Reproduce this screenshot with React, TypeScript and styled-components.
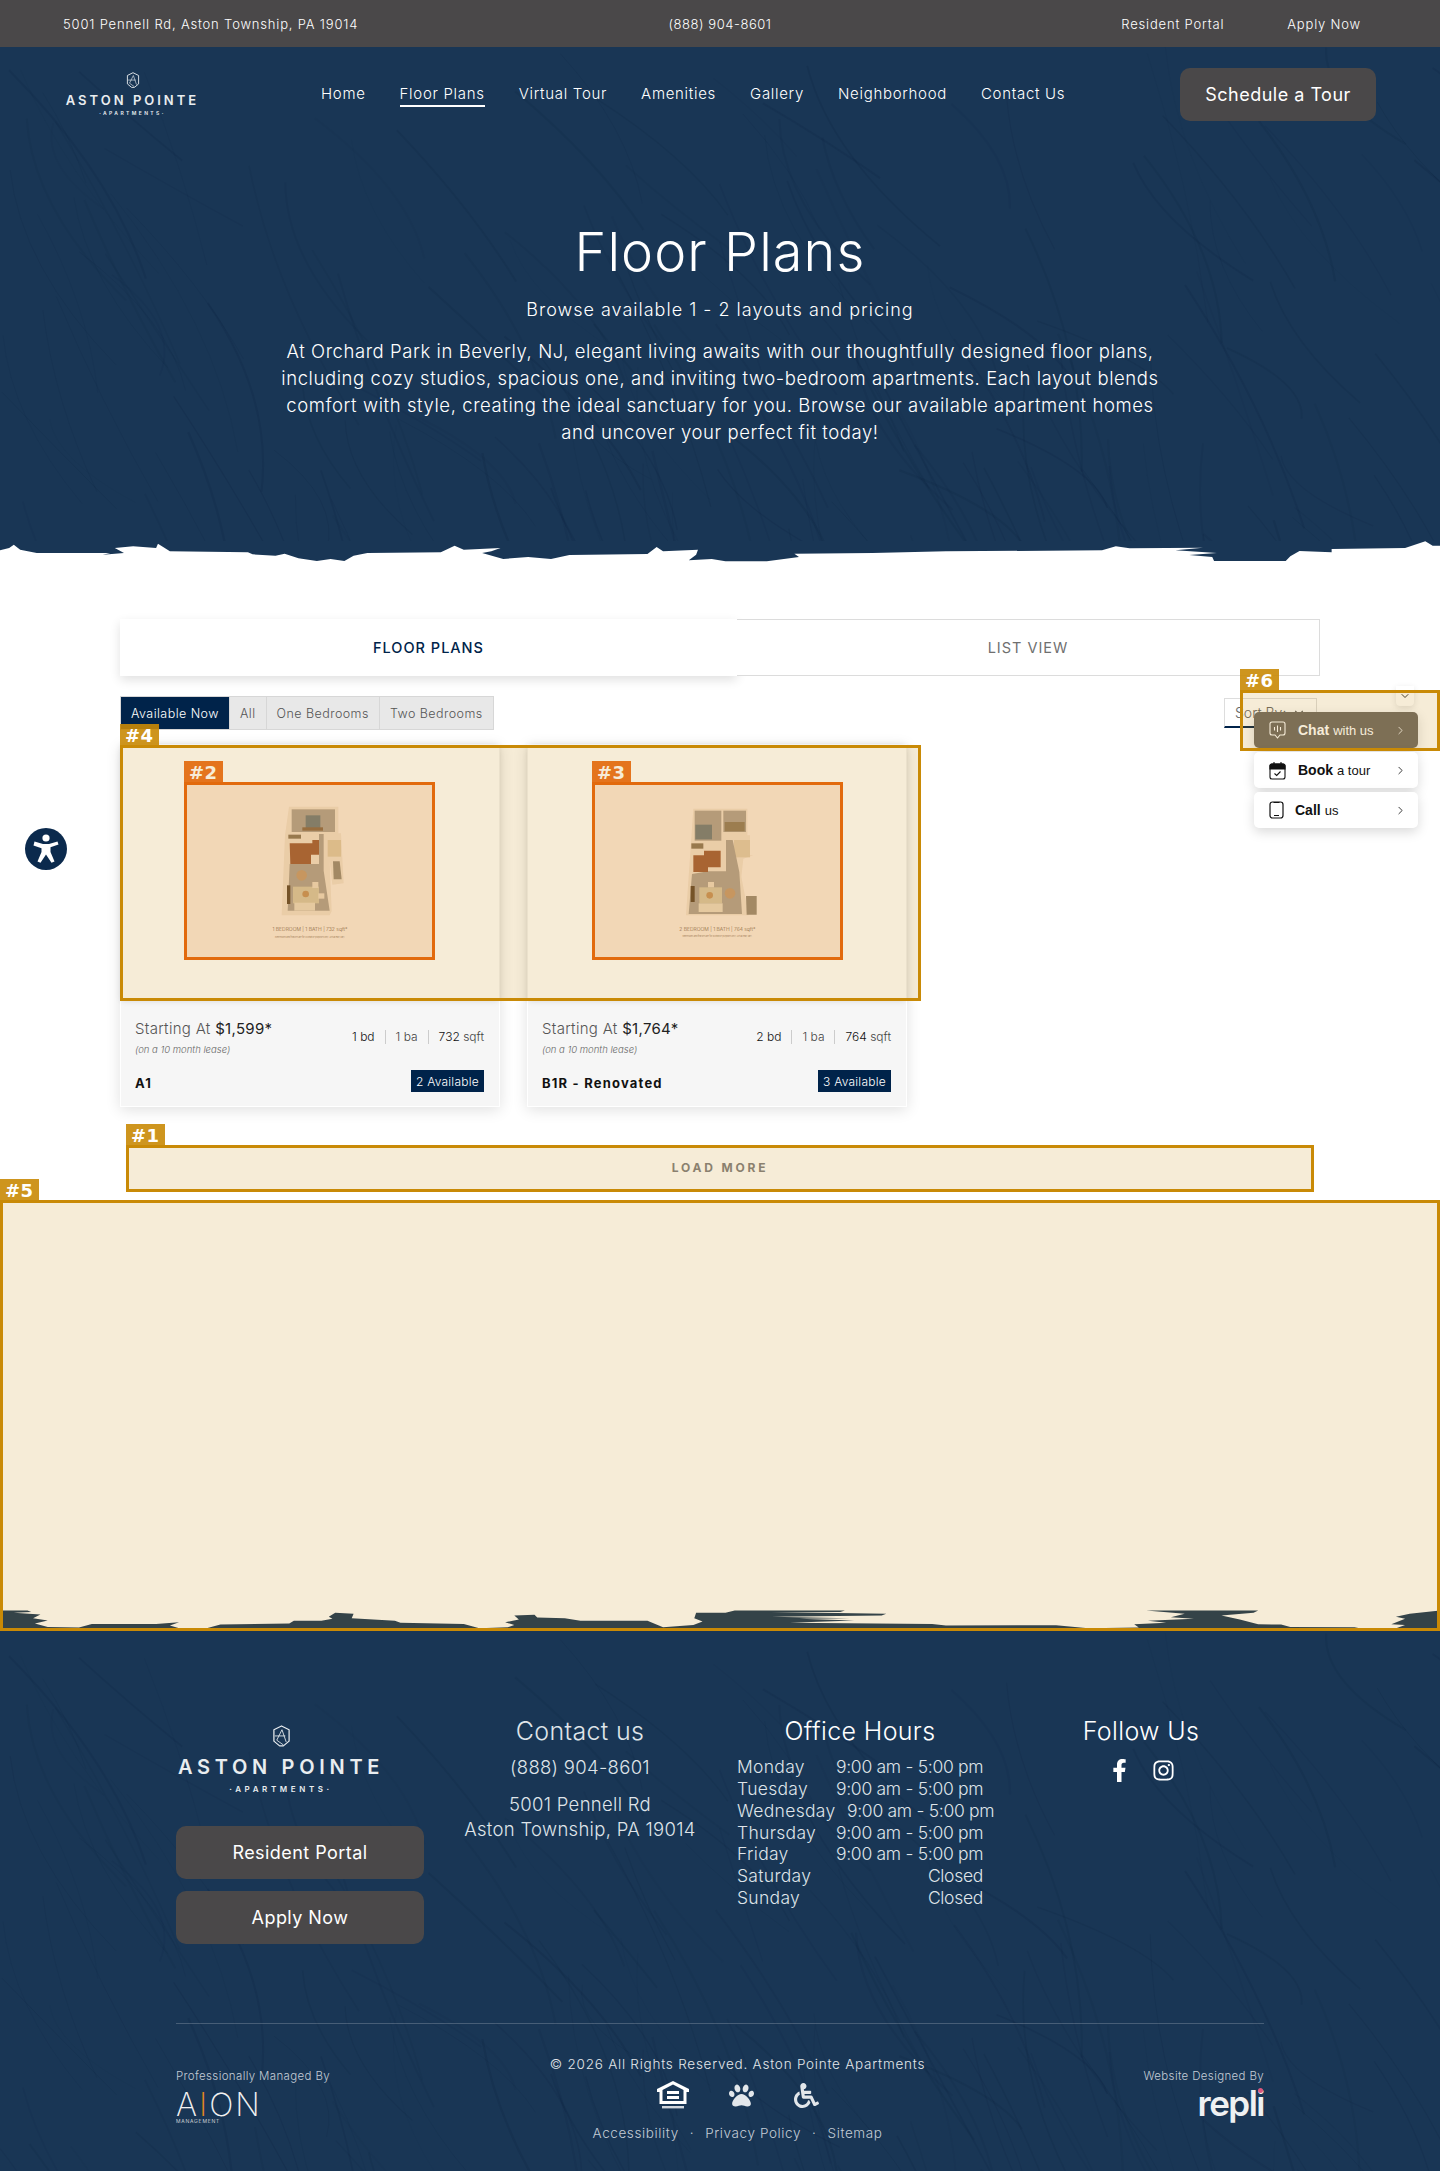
import styled, { createGlobalStyle } from "styled-components";
import { FaFacebookF, FaInstagram, FaPaw, FaWheelchair } from "react-icons/fa";
import { LuChevronDown, LuChevronRight } from "react-icons/lu";

const SANS = `"Inter", "Liberation Sans", sans-serif`;
const NAVY = "#193655";
const SLATE = "#4a4849";
const INK = "#00234a";

// soft brush strokes used behind the navy areas
const makeTexture = () => {
  let seed = 7;
  const rnd = () => {
    seed = (seed * 16807) % 2147483647;
    return seed / 2147483647;
  };
  let paths = "";
  for (let i = 0; i < 190; i++) {
    const x = rnd() * 1440;
    const y = rnd() * 560;
    const len = 70 + rnd() * 200;
    const lean = 40 + rnd() * 100;
    const bend = rnd() * 90 - 45;
    paths += `<path d='M${x} ${y}q${lean / 2 + bend} ${len / 2} ${lean} ${len}' fill='none' stroke='rgba(0,20,45,${(0.04 + rnd() * 0.07).toFixed(2)})' stroke-width='${(0.6 + rnd() * 1.6).toFixed(1)}'/>`;
  }
  const svg = `<svg xmlns='http://www.w3.org/2000/svg' width='1440' height='560'>${paths}</svg>`;
  return `url("data:image/svg+xml,${encodeURIComponent(svg)}")`;
};
const texture = makeTexture();

const GlobalStyle = createGlobalStyle`
  * { box-sizing: border-box; }
  html, body { margin: 0; padding: 0; background: #fff; }
  body { font-family: ${SANS}; }
  a { color: inherit; text-decoration: none; }
`;

const Page = styled.div`
  position: relative;
  width: 1440px;
  height: 2171px;
  overflow: hidden;
  background: #fff;
`;

const TopBar = styled.div`
  display: grid;
  grid-template-columns: 1fr auto 1fr;
  align-items: center;
  height: 47px;
  padding: 0 63px;
  background: ${SLATE};
  color: #fff;
  font-size: 13px;
  font-weight: 300;
  letter-spacing: 0.82px;
`;

const Phone = styled.span`
  letter-spacing: 0.55px;
`;

const TopLinks = styled.div`
  display: flex;
  justify-content: flex-end;
  gap: 63px;
  padding-right: 16px;
`;

const Hero = styled.header`
  height: 494px;
  padding-top: 21px;
  background: ${NAVY} ${texture};
  color: #fff;
`;

const NavRow = styled.div`
  display: flex;
  align-items: center;
  height: 53px;
  padding: 0 64px 0 66px;
`;

const Brand = styled.div<{ $big?: boolean }>`
  display: flex;
  flex-direction: column;
  align-items: center;
  align-self: ${(p) => (p.$big ? "flex-start" : "auto")};
  width: ${(p) => (p.$big ? 210 : 133)}px;
  color: #e9edf0;
`;

const BrandName = styled.div<{ $big?: boolean }>`
  margin-top: ${(p) => (p.$big ? 10 : 5)}px;
  font-size: ${(p) => (p.$big ? 20 : 13)}px;
  line-height: ${(p) => (p.$big ? 20 : 14)}px;
  font-weight: 600;
  letter-spacing: ${(p) => (p.$big ? 4.7 : 3)}px;
  white-space: nowrap;
`;

const BrandSub = styled.div<{ $big?: boolean }>`
  margin-top: ${(p) => (p.$big ? 7 : 3)}px;
  font-size: ${(p) => (p.$big ? 8 : 5)}px;
  line-height: ${(p) => (p.$big ? 10 : 7)}px;
  font-weight: 600;
  letter-spacing: ${(p) => (p.$big ? 3.6 : 2.4)}px;
  white-space: nowrap;
`;

const Nav = styled.nav`
  display: flex;
  gap: 34px;
  margin-left: 122px;
  font-size: 15px;
  font-weight: 300;
  letter-spacing: 0.7px;
`;

const NavLink = styled.a<{ $active?: boolean }>`
  padding: 2px 0;
  border-bottom: 2px solid ${(p) => (p.$active ? "#fff" : "transparent")};
  white-space: nowrap;
`;

const TourButton = styled.a`
  display: flex;
  align-items: center;
  justify-content: center;
  width: 196px;
  height: 53px;
  margin-left: auto;
  border-radius: 10px;
  background: ${SLATE};
  color: #fff;
  font-size: 18px;
  font-weight: 400;
  letter-spacing: 0.5px;
`;

const HeroText = styled.div`
  display: flex;
  flex-direction: column;
  align-items: center;
  margin-top: 98px;
  text-align: center;
`;

const Title = styled.h1`
  margin: 0;
  font-size: 54px;
  line-height: 66px;
  font-weight: 300;
  letter-spacing: 1.1px;
`;

const Subtitle = styled.div`
  margin-top: 12px;
  font-size: 18px;
  line-height: 26px;
  font-weight: 300;
  letter-spacing: 1px;
`;

const Intro = styled.p`
  width: 885px;
  margin: 15px 0 0;
  font-size: 18.5px;
  line-height: 27px;
  font-weight: 300;
  letter-spacing: 0.58px;
`;

const TornEdge = styled.svg<{ $h: number }>`
  display: block;
  width: 1440px;
  height: ${(p) => p.$h}px;
`;

const Main = styled.main`
  height: 1045px;
  padding: 57px 120px 0;
`;

const Tabs = styled.div`
  display: grid;
  grid-template-columns: 617px 583px;
  height: 57px;
`;

const Tab = styled.a<{ $active?: boolean }>`
  display: flex;
  align-items: center;
  justify-content: center;
  font-size: 14.5px;
  letter-spacing: 1px;
  color: ${(p) => (p.$active ? INK : "#6f6f6f")};
  font-weight: ${(p) => (p.$active ? 500 : 400)};
  border: ${(p) => (p.$active ? "0" : "1px solid #dcdcdc")};
  border-left: 0;
  box-shadow: ${(p) => (p.$active ? "0 4px 10px rgba(0,0,0,.12)" : "none")};
  background: #fff;
`;

const ToolRow = styled.div`
  display: flex;
  justify-content: space-between;
  align-items: flex-start;
  margin-top: 20px;
`;

const Filters = styled.div`
  display: flex;
  height: 34px;
  border: 1px solid #d7d7d7;
  background: #e8e8e8;
`;

const Filter = styled.a<{ $active?: boolean }>`
  display: flex;
  align-items: center;
  padding: 0 10px;
  font-size: 12.5px;
  font-weight: 300;
  letter-spacing: 0.45px;
  color: ${(p) => (p.$active ? "#fff" : "#555")};
  background: ${(p) => (p.$active ? INK : "transparent")};
  & + & {
    border-left: 1px solid #d7d7d7;
  }
`;

const SortBox = styled.div`
  display: flex;
  align-items: center;
  justify-content: space-between;
  width: 93px;
  height: 30px;
  margin: 2px 3px 0 0;
  padding: 0 10px;
  border: 1px solid #ddd;
  border-bottom: 2px solid ${INK};
  font-size: 14px;
  font-weight: 300;
  color: #666;
  white-space: nowrap;
`;

const Cards = styled.div`
  display: grid;
  grid-template-columns: repeat(3, 380px);
  gap: 27px;
  margin-top: 14px;
`;

const Card = styled.article`
  height: 363px;
  border: 1px solid #fff;
  background: #f6f6f6;
  box-shadow: 0 3px 14px rgba(0, 0, 0, 0.12);
`;

const CardImage = styled.div`
  display: flex;
  align-items: center;
  justify-content: center;
  height: 256px;
  background: #fff;
  box-shadow: 0 0 6px rgba(0, 0, 0, 0.12);
`;

const PlanSvg = styled.svg`
  width: 251px;
  height: 178px;
  margin-bottom: 4px;
`;

const CardBody = styled.div`
  padding: 17px 15px 0 14px;
`;

const PriceRow = styled.div`
  display: flex;
  justify-content: space-between;
  align-items: flex-end;
`;

const Price = styled.div`
  font-size: 15px;
  line-height: 22px;
  font-weight: 300;
  letter-spacing: 0.3px;
  color: #555;
  b {
    font-weight: 400;
    color: #222;
  }
`;

const Stats = styled.div`
  display: flex;
  align-items: center;
  margin-bottom: -4px;
  font-size: 12px;
  font-weight: 300;
  color: #444;
`;

const Stat = styled.span`
  padding: 0 10px;
  line-height: 14px;
  border-left: 1px solid #ccc;
  &:first-child {
    border-left: 0;
  }
  &:last-child {
    padding-right: 0;
  }
  b {
    font-weight: 300;
    color: #111;
  }
`;

const Lease = styled.div`
  margin-top: 4px;
  font-size: 9.5px;
  line-height: 12px;
  font-style: italic;
  font-weight: 300;
  color: #666;
`;

const NameRow = styled.div`
  display: flex;
  justify-content: space-between;
  align-items: flex-end;
  margin-top: 14px;
`;

const PlanName = styled.div`
  font-size: 13px;
  line-height: 18px;
  font-weight: 700;
  letter-spacing: 1.2px;
  color: #111;
`;

const Badge = styled.span`
  display: flex;
  align-items: center;
  height: 22px;
  padding: 0 5px;
  background: ${INK};
  color: #fff;
  font-size: 12px;
  font-weight: 300;
  letter-spacing: 0.25px;
`;

const LoadMore = styled.a`
  display: flex;
  align-items: center;
  justify-content: center;
  height: 47px;
  margin: 37px 6px 0;
  font-size: 12px;
  font-weight: 700;
  letter-spacing: 2.8px;
  color: #7f7f83;
`;

const Footer = styled.footer`
  height: 541px;
  padding: 75px 176px 0;
  background: ${NAVY} ${texture};
  color: #fff;
`;

const FooterTop = styled.div`
  display: flex;
  height: 316px;
  border-bottom: 1px solid rgba(255, 255, 255, 0.2);
`;

const BrandCol = styled.div`
  display: flex;
  flex-direction: column;
  align-items: center;
  width: 248px;
  padding-top: 17px;
`;

const FooterButton = styled.a<{ $first?: boolean }>`
  display: flex;
  align-items: center;
  justify-content: center;
  width: 248px;
  height: 53px;
  margin-top: ${(p) => (p.$first ? 32 : 12)}px;
  border-radius: 10px;
  background: ${SLATE};
  color: #fff;
  font-size: 18px;
  font-weight: 400;
  letter-spacing: 0.45px;
`;

const ColTitle = styled.h3`
  margin: 0;
  font-size: 25px;
  line-height: 46px;
  font-weight: 300;
  letter-spacing: 0.35px;
`;

const ContactCol = styled.div`
  width: 248px;
  margin-left: 32px;
  text-align: center;
  font-size: 18.5px;
  line-height: 25px;
  font-weight: 300;
  letter-spacing: 0.3px;
  color: #dfe4e9;
  white-space: nowrap;
  display: flex;
  flex-direction: column;
  align-items: center;
`;

const ContactLine = styled.div<{ $gap: number }>`
  margin-top: ${(p) => p.$gap}px;
`;

const HoursCol = styled.div`
  display: flex;
  flex-direction: column;
  width: 257px;
  margin-left: 33px;
  font-size: 17.5px;
  line-height: 21.85px;
  font-weight: 300;
  letter-spacing: 0.3px;
  color: #dfe4e9;
`;

const HoursTitle = styled(ColTitle)`
  margin-bottom: 2px;
  font-size: 25px;
  text-align: center;
  color: #fff;
  width: 246px;
`;

const HoursRow = styled.div`
  display: flex;
  white-space: nowrap;
`;

const Day = styled.span`
  min-width: 99px;
  padding-right: 15px;
`;

const Time = styled.span`
  width: 147px;
  text-align: right;
  letter-spacing: -0.3px;
`;

const FollowCol = styled.div`
  display: flex;
  flex-direction: column;
  align-items: center;
  width: 200px;
  margin-left: 47px;
`;

const Socials = styled.div`
  display: flex;
  align-items: center;
  gap: 21px;
  margin-top: 5px;
  font-size: 23px;
`;

const FooterBottom = styled.div`
  display: grid;
  grid-template-columns: 1fr auto 1fr;
  margin-top: 31px;
`;

const CreditCol = styled.div<{ $right?: boolean }>`
  display: flex;
  flex-direction: column;
  align-items: ${(p) => (p.$right ? "flex-end" : "flex-start")};
  padding-top: 13px;
  font-size: 11.5px;
  line-height: 16px;
  font-weight: 300;
  letter-spacing: 0.35px;
  color: #c3ccd5;
`;

const AionLogo = styled.div`
  display: flex;
  flex-direction: column;
  margin-top: 8px;
  color: #f1f1f1;
`;

const AionName = styled.div`
  font-size: 32px;
  line-height: 25px;
  font-weight: 200;
  letter-spacing: 2px;
  span {
    color: #e8891e;
  }
`;

const AionSub = styled.div`
  font-size: 5px;
  line-height: 8px;
  letter-spacing: 0.8px;
`;

const RepliLogo = styled.div`
  margin-top: 1px;
  font-size: 35px;
  line-height: 36px;
  font-weight: 600;
  letter-spacing: -1.5px;
  color: #eef0f2;
  span {
    position: relative;
  }
  span::after {
    content: "";
    position: absolute;
    left: 2px;
    top: 6px;
    width: 5px;
    height: 5px;
    border-radius: 50%;
    background: #d9577e;
  }
`;

const LegalCol = styled.div`
  display: flex;
  flex-direction: column;
  align-items: center;
  padding-left: 35px;
  font-size: 13.5px;
  line-height: 18px;
  font-weight: 300;
  letter-spacing: 0.76px;
  color: #e2e6ea;
`;

const LegalIcons = styled.div`
  display: flex;
  align-items: center;
  gap: 40px;
  height: 28px;
  margin-top: 8px;
  padding-left: 2px;
  font-size: 25px;
`;

const LegalLinks = styled.div`
  display: flex;
  gap: 11px;
  margin-top: 15px;
  letter-spacing: 0.6px;
  color: #c3ccd5;
`;

const A11yButton = styled.a`
  position: absolute;
  left: 25px;
  top: 828px;
  width: 42px;
  height: 42px;
`;

const Widget = styled.div`
  position: absolute;
  left: 1254px;
  top: 686px;
  display: flex;
  flex-direction: column;
  gap: 4px;
  width: 164px;
  font-family: "Liberation Sans", Arial, sans-serif;
`;

const Collapse = styled.a`
  display: flex;
  align-items: center;
  justify-content: center;
  align-self: flex-end;
  width: 18px;
  height: 20px;
  margin: 0 4px 2px 0;
  border-radius: 0 0 4px 4px;
  background: #fff;
  box-shadow: 0 2px 6px rgba(0, 0, 0, 0.12);
  color: #333;
  font-size: 12px;
`;

const WidgetItem = styled.a<{ $dark?: boolean; $indent: number }>`
  display: flex;
  align-items: center;
  height: 36px;
  padding: 0 11px 0 15px;
  border-radius: 5px;
  background: ${(p) => (p.$dark ? "#6f6a65" : "#fff")};
  color: ${(p) => (p.$dark ? "#fff" : "#111")};
  box-shadow: 0 4px 12px rgba(0, 0, 0, 0.15);
  font-size: 13px;
  svg:last-child {
    margin-left: auto;
    font-size: 13px;
    stroke-width: 1.5;
  }
  b {
    margin-left: ${(p) => p.$indent}px;
    margin-right: 4px;
    font-size: 14px;
    font-weight: 700;
  }
`;

const Marker = styled.div<{ $x: number; $y: number; $w: number; $h: number; $orange?: boolean }>`
  position: absolute;
  left: ${(p) => p.$x}px;
  top: ${(p) => p.$y}px;
  width: ${(p) => p.$w}px;
  height: ${(p) => p.$h}px;
  border: 3px solid ${(p) => (p.$orange ? "#e8650f" : "#c98a06")};
  background: ${(p) => (p.$orange ? "rgba(232,101,15,.16)" : "rgba(201,138,6,.16)")};
`;

const MarkerTag = styled.span<{ $orange?: boolean }>`
  position: absolute;
  left: -3px;
  top: -24px;
  width: 39px;
  height: 21px;
  padding-left: 5px;
  background: ${(p) => (p.$orange ? "rgba(232,101,15,.92)" : "rgba(201,138,6,.9)")};
  color: #fff;
  font-family: "DejaVu Sans", sans-serif;
  font-size: 18px;
  line-height: 24px;
  font-weight: 700;
  letter-spacing: 0.3px;
`;

const LogoMark = ({ size }: { size: number }) => (
  <svg width={size} height={size * 1.15} viewBox="0 0 20 23" fill="none" stroke="currentColor" strokeWidth="1.3">
    <path d="M10 1 18 5v12l-6 5H8l-6-5V5z" strokeLinejoin="round" />
    <path d="M5 16 10.5 5 15 18M3 11.5h11M5 16l7 5" strokeWidth="0.9" />
  </svg>
);

const HousingIcon = () => (
  <svg width="32" height="28" viewBox="0 0 32 28" fill="#fff">
    <path d="M16 0 0 8v3h2.5v12h27V11H32V8zM26.5 20h-21V9L16 3.6 26.5 9z" />
    <rect x="10" y="10" width="12" height="3" />
    <rect x="10" y="15" width="12" height="3" />
    <rect x="5" y="25" width="22" height="2.4" opacity="0.8" />
  </svg>
);

const PlanBlur = styled.g`
  filter: blur(0.8px);
`;

const PlanCaption = styled.text`
  fill: #6b6258;
  font-family: ${SANS};
  font-weight: 300;
  text-anchor: middle;
`;

const PlanOne = () => (
  <PlanSvg viewBox="252 126 753 534">
    <PlanBlur>
      <path d="M564 200h148v80h8l8 150-34 4-8-70 6 150-6 12-144 0 10-240z" fill="#f4f1ea" />
      <rect x="572" y="208" width="130" height="68" fill="#a8aba8" />
      <rect x="614" y="226" width="44" height="44" fill="#64808f" />
      <rect x="604" y="262" width="62" height="10" fill="#7f6a56" />
      <path d="M654 282h14v110l18 120H560l6-140h88z" fill="#a8aba8" />
      <path d="M566 310h68v-10h20v44h-24v28h-62z" fill="#965d45" />
      <rect x="562" y="284" width="38" height="12" fill="#7f7a6a" />
      <circle cx="602" cy="406" r="16" fill="#c1a485" />
      <rect x="576" y="440" width="78" height="50" fill="#d6d6be" />
      <circle cx="614" cy="462" r="10" fill="#c19a6e" />
      <rect x="580" y="488" width="62" height="24" fill="#ececdf" />
      <rect x="558" y="436" width="10" height="56" fill="#4e4436" />
      <rect x="634" y="426" width="18" height="18" fill="#f0ece0" />
      <rect x="652" y="460" width="18" height="16" fill="#f0ece0" />
      <path d="M680 300h40v50h-40z" fill="#dfd8c0" />
      <path d="M696 364h20l6 54h-24z" fill="#8f928c" />
    </PlanBlur>
    <PlanCaption x="627" y="572" fontSize="15">1 BEDROOM | 1 BATH | 732 sqft*</PlanCaption>
    <PlanCaption x="627" y="593" fontSize="6">Dimensions and features are for illustrative purposes only. Actual may vary.</PlanCaption>
  </PlanSvg>
);

const PlanTwo = () => (
  <PlanSvg viewBox="-144 -24 753 534">
    <PlanBlur>
      <path d="M160 56h162v80h8v60h10l-30 10-6 54 22 116-188 0z" fill="#f4f1ea" />
      <rect x="164" y="62" width="80" height="90" fill="#a8aba8" />
      <rect x="166" y="104" width="50" height="44" fill="#64808f" />
      <rect x="250" y="62" width="68" height="64" fill="#a8aba8" />
      <rect x="254" y="96" width="60" height="28" fill="#85806e" />
      <rect x="282" y="150" width="48" height="52" fill="#e2dcc6" />
      <path d="M258 150h20l20 96 8 126H146l10-120 48-8h54z" fill="#a8aba8" />
      <path d="M160 196h32v-14h50v50h-38v14h-44z" fill="#965d45" />
      <rect x="154" y="160" width="36" height="16" fill="#7f7a6a" />
      <rect x="178" y="292" width="68" height="48" fill="#d6d6be" />
      <circle cx="209" cy="316" r="10" fill="#c19a6e" />
      <circle cx="270" cy="310" r="16" fill="#c1a485" />
      <rect x="176" y="340" width="72" height="26" fill="#ececdf" />
      <rect x="152" y="288" width="12" height="48" fill="#4e4436" />
      <rect x="204" y="276" width="18" height="16" fill="#f0ece0" />
      <path d="M318 318h32v56h-30z" fill="#8f928c" />
    </PlanBlur>
    <PlanCaption x="232" y="422" fontSize="15">2 BEDROOM | 1 BATH | 764 sqft*</PlanCaption>
    <PlanCaption x="232" y="442" fontSize="6">Dimensions and features are for illustrative purposes only. Actual may vary.</PlanCaption>
  </PlanSvg>
);

const floorPlans = [
  { id: "a1", price: "$1,599", bd: "1 bd", ba: "1 ba", sqft: "732", name: "A1", left: "2 Available", Plan: PlanOne },
  { id: "b1r", price: "$1,764", bd: "2 bd", ba: "1 ba", sqft: "764", name: "B1R - Renovated", left: "3 Available", Plan: PlanTwo },
];

const hours = [
  ["Monday", "9:00 am - 5:00 pm"],
  ["Tuesday", "9:00 am - 5:00 pm"],
  ["Wednesday", "9:00 am - 5:00 pm"],
  ["Thursday", "9:00 am - 5:00 pm"],
  ["Friday", "9:00 am - 5:00 pm"],
  ["Saturday", "Closed"],
  ["Sunday", "Closed"],
];

const markers = [
  { n: 1, x: 126, y: 1145, w: 1188, h: 47 },
  { n: 2, x: 184, y: 782, w: 251, h: 178, orange: true },
  { n: 3, x: 592, y: 782, w: 251, h: 178, orange: true },
  { n: 4, x: 120, y: 745, w: 801, h: 256 },
  { n: 5, x: 0, y: 1200, w: 1440, h: 431 },
  { n: 6, x: 1240, y: 690, w: 200, h: 61 },
];

export default function App() {
  return (
    <Page>
      <GlobalStyle />
      <TopBar>
        <span>5001 Pennell Rd, Aston Township, PA 19014</span>
        <Phone>(888) 904-8601</Phone>
        <TopLinks>
          <a>Resident Portal</a>
          <a>Apply Now</a>
        </TopLinks>
      </TopBar>

      <Hero>
        <NavRow>
          <Brand>
            <LogoMark size={14} />
            <BrandName>ASTON POINTE</BrandName>
            <BrandSub>·APARTMENTS·</BrandSub>
          </Brand>
          <Nav>
            <NavLink>Home</NavLink>
            <NavLink $active>Floor Plans</NavLink>
            <NavLink>Virtual Tour</NavLink>
            <NavLink>Amenities</NavLink>
            <NavLink>Gallery</NavLink>
            <NavLink>Neighborhood</NavLink>
            <NavLink>Contact Us</NavLink>
          </Nav>
          <TourButton>Schedule a Tour</TourButton>
        </NavRow>
        <HeroText>
          <Title>Floor Plans</Title>
          <Subtitle>Browse available 1 - 2 layouts and pricing</Subtitle>
          <Intro>
            At Orchard Park in Beverly, NJ, elegant living awaits with our thoughtfully designed floor plans,
            including cozy studios, spacious one, and inviting two-bedroom apartments. Each layout blends
            comfort with style, creating the ideal sanctuary for you. Browse our available apartment homes
            and uncover your perfect fit today!
          </Intro>
        </HeroText>
      </Hero>
      <TornEdge $h={21} viewBox="0 64 1568 63" preserveAspectRatio="none">
        <path
          fill={NAVY}
          d="M0 64V92L10 85 15 75 22 90 40 100H120L112 105 135 100 125 85 145 80 170 85 172 72 185 95 270 98 275 104 300 108 310 102 325 116 345 124 360 118 375 124 385 108 400 100 480 98 495 78 505 90 545 85 535 95 525 100 548 118 575 112 600 118 620 106 705 103 715 82 722 95 760 90 758 105 750 122 775 118 790 125H835L870 112 865 102 950 100 1030 95 1200 92 1215 80 1230 86 1310 84 1280 92 1325 100 1295 106 1320 112 1322 124H1400L1405 110 1415 94 1450 98V88L1530 85 1552 65 1560 78H1568V64Z"
        />
      </TornEdge>

      <Main>
        <Tabs>
          <Tab $active>FLOOR PLANS</Tab>
          <Tab>LIST VIEW</Tab>
        </Tabs>
        <ToolRow>
          <Filters>
            <Filter $active>Available Now</Filter>
            <Filter>All</Filter>
            <Filter>One Bedrooms</Filter>
            <Filter>Two Bedrooms</Filter>
          </Filters>
          <SortBox>
            Sort By:
            <LuChevronDown />
          </SortBox>
        </ToolRow>
        <Cards>
          {floorPlans.map(({ Plan, ...fp }) => (
            <Card key={fp.id}>
              <CardImage>
                <Plan />
              </CardImage>
              <CardBody>
                <PriceRow>
                  <Price>
                    Starting At <b>{fp.price}*</b>
                  </Price>
                  <Stats>
                    <Stat><b>{fp.bd}</b></Stat>
                    <Stat>{fp.ba}</Stat>
                    <Stat><b>{fp.sqft}</b> sqft</Stat>
                  </Stats>
                </PriceRow>
                <Lease>(on a 10 month lease)</Lease>
                <NameRow>
                  <PlanName>{fp.name}</PlanName>
                  <Badge>{fp.left}</Badge>
                </NameRow>
              </CardBody>
            </Card>
          ))}
        </Cards>
        <LoadMore>LOAD MORE</LoadMore>
      </Main>

      <TornEdge $h={26} viewBox="0 75 1568 77" preserveAspectRatio="none">
        <path
          fill={NAVY}
          d="M0 152V85H30L34 90 15 92 44 97 36 108 52 115 38 124 52 134 86 136 100 125H170L195 120 185 130 198 140 225 138 240 127 315 124 320 116H350L362 110 358 104 365 92 385 95 383 108 430 116 436 122 505 125 522 138 553 135 560 128 550 120 565 112 560 100 582 98 585 106 615 108 632 116H705L722 135 755 128 765 118 756 108 758 92H790L800 85H920L915 90H840L965 95 960 100 840 104 925 108 870 110 930 115 860 122 1015 125 1030 130 1150 129 1185 138 1240 136 1235 126 1270 122 1250 116 1300 110 1275 105 1290 95 1248 85H1370L1365 92 1330 100 1350 112 1370 126 1395 127 1405 134 1475 135 1490 143H1515L1530 128 1515 126 1530 110 1520 104 1535 95 1568 85V152Z"
        />
      </TornEdge>

      <Footer>
        <FooterTop>
          <BrandCol>
            <Brand $big>
              <LogoMark size={19} />
              <BrandName $big>ASTON POINTE</BrandName>
              <BrandSub $big>·APARTMENTS·</BrandSub>
            </Brand>
            <FooterButton $first>Resident Portal</FooterButton>
            <FooterButton>Apply Now</FooterButton>
          </BrandCol>
          <ContactCol>
            <ColTitle>Contact us</ColTitle>
            <ContactLine $gap={1}>(888) 904-8601</ContactLine>
            <ContactLine $gap={12}>5001 Pennell Rd</ContactLine>
            <ContactLine $gap={0}>Aston Township, PA 19014</ContactLine>
          </ContactCol>
          <HoursCol>
            <HoursTitle>Office Hours</HoursTitle>
            {hours.map(([day, time]) => (
              <HoursRow key={day}>
                <Day>{day}</Day>
                <Time>{time}</Time>
              </HoursRow>
            ))}
          </HoursCol>
          <FollowCol>
            <ColTitle>Follow Us</ColTitle>
            <Socials>
              <FaFacebookF />
              <FaInstagram />
            </Socials>
          </FollowCol>
        </FooterTop>
        <FooterBottom>
          <CreditCol>
            Professionally Managed By
            <AionLogo>
              <AionName>A<span>I</span>ON</AionName>
              <AionSub>MANAGEMENT</AionSub>
            </AionLogo>
          </CreditCol>
          <LegalCol>
            © 2026 All Rights Reserved. Aston Pointe Apartments
            <LegalIcons>
              <HousingIcon />
              <FaPaw />
              <FaWheelchair />
            </LegalIcons>
            <LegalLinks>
              <a>Accessibility</a>
              <span>·</span>
              <a>Privacy Policy</a>
              <span>·</span>
              <a>Sitemap</a>
            </LegalLinks>
          </LegalCol>
          <CreditCol $right>
            Website Designed By
            <RepliLogo>repl<span>i</span></RepliLogo>
          </CreditCol>
        </FooterBottom>
      </Footer>

      <A11yButton aria-label="Accessibility">
        <svg width="42" height="42" viewBox="0 0 42 42">
          <circle cx="21" cy="21" r="21" fill="#0b2a4d" />
          <circle cx="21" cy="10" r="3.6" fill="#fff" />
          <path
            fill="#fff"
            d="M9.500 13.500 18 16h6l8.500-2.500 1 3-8 2.700V24l4 9.500-3 1.300L21 26.500l-5.500 8.300-3-1.300 4-9.500v-3.800l-8-2.700z"
          />
        </svg>
      </A11yButton>

      <Widget>
        <Collapse>
          <LuChevronDown />
        </Collapse>
        <WidgetItem $dark $indent={12}>
          <svg width="17" height="19" viewBox="0 0 17 19" fill="none" stroke="currentColor" strokeWidth="1.1">
            <path d="M3 1h11a2 2 0 0 1 2 2v9a2 2 0 0 1-2 2h-3l-2.500 3-2.500-3H3a2 2 0 0 1-2-2V3a2 2 0 0 1 2-2z" />
            <path d="M5.500 6v3.500M8.500 4.500v6.500M11.500 6v3.500" />
          </svg>
          <b>Chat</b> with us
          <LuChevronRight />
        </WidgetItem>
        <WidgetItem $indent={12}>
          <svg width="17" height="19" viewBox="0 0 17 19" fill="none" stroke="currentColor" strokeWidth="1.1">
            <path d="M1 5a2 2 0 0 1 2-2h11a2 2 0 0 1 2 2v3H1z" fill="currentColor" />
            <rect x="1" y="3" width="15" height="15" rx="2" />
            <path d="M5 1v3M12 1v3M5.500 12.500l2.200 2 3.800-4" />
          </svg>
          <b>Book</b> a tour
          <LuChevronRight />
        </WidgetItem>
        <WidgetItem $indent={11}>
          <svg width="15" height="18" viewBox="0 0 15 18" fill="none" stroke="currentColor" strokeWidth="1.2">
            <rect x="1" y="1" width="13" height="16" rx="2.500" />
            <path d="M4.500 1.500h6M5 14.500h5" />
          </svg>
          <b>Call</b> us
          <LuChevronRight />
        </WidgetItem>
      </Widget>

      {markers.map((m) => (
        <Marker key={m.n} $x={m.x} $y={m.y} $w={m.w} $h={m.h} $orange={m.orange}>
          <MarkerTag $orange={m.orange}>#{m.n}</MarkerTag>
        </Marker>
      ))}
    </Page>
  );
}
